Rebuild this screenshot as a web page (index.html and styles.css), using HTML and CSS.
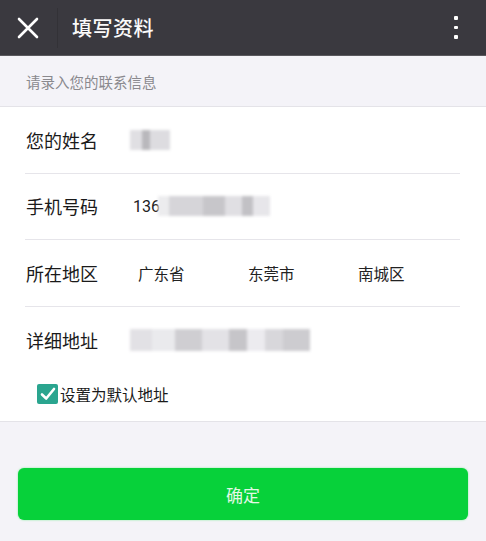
FILE: index.html
```html
<!DOCTYPE html>
<html lang="zh-CN">
<head>
  <meta charset="UTF-8">
  <meta name="viewport" content="width=device-width, initial-scale=1">
  <title>填写资料</title>
  <link rel="stylesheet" href="styles.css">
</head>
<body>
  <!-- Top bar -->
  <header class="topbar">
    <button class="close" aria-label="关闭">
      <svg width="22" height="22" viewBox="0 0 22 22"><path d="M2 2 L20 20 M20 2 L2 20" stroke="#fff" stroke-width="2.6" stroke-linecap="round"/></svg>
    </button>
    <span class="divider"></span>
    <h1 class="title">填写资料</h1>
    <button class="more" aria-label="更多"><i></i><i></i><i></i></button>
  </header>

  <div class="hint">请录入您的联系信息</div>

  <!-- Contact form -->
  <form class="form">
    <div class="row">
      <span class="label">您的姓名</span>
      <span class="value"><span class="mask mask-name"></span></span>
    </div>
    <div class="row">
      <span class="label">手机号码</span>
      <span class="value">136<span class="mask mask-phone"></span></span>
    </div>
    <div class="row">
      <span class="label">所在地区</span>
      <span class="value region">
        <span>广东省</span>
        <span>东莞市</span>
        <span>南城区</span>
      </span>
    </div>
    <div class="row last">
      <span class="label">详细地址</span>
      <span class="value"><span class="mask mask-addr"></span></span>
    </div>
    <label class="default">
      <span class="check">
        <svg width="20" height="20" viewBox="0 0 20 20"><path d="M4 10.5 L8.2 14.5 L16 5" fill="none" stroke="#fff" stroke-width="2.6" stroke-linecap="round" stroke-linejoin="round"/></svg>
      </span>
      设置为默认地址
    </label>
  </form>

  <div class="actions">
    <button class="submit" type="button">确定</button>
  </div>
</body>
</html>
```

FILE: styles.css
```css
:root {
  --bar: #3a393f;
  --page: #f4f3f8;
  --line: #e4e3e8;
  --green: #07d13a;
  --teal: #2aa58f;
  --font-stack: "Noto Sans CJK SC", "Noto Sans", sans-serif;
}
* {box-sizing: border-box; margin: 0; padding: 0;}
body {
  font-family: var(--font-stack);
  background: var(--page);
  color: #111;
  min-height: 100vh;
}
button {font-family: inherit; border: none; background: none; cursor: pointer;}

/* Top bar */
.topbar {
  height: 56px;
  background: var(--bar);
  display: flex;
  align-items: center;
  padding: 0 16px 0 16px;
  border-bottom: 1px solid #5a595e;
}
.close {width: 24px; height: 24px; display: flex; align-items: center; justify-content: center;}
.divider {width: 1px; height: 40px; background: #333237; margin: 0 14px 0 17px;}
.title {font-size: 20px; font-weight: 500; color: #fafafa; flex: 1; letter-spacing: 0.5px;}
.more {display: flex; flex-direction: column; gap: 6px; align-items: center; width: 10px; margin-right: 9px;}
.more i {width: 3.5px; height: 3.5px; background: #fff; border-radius: 1px;}

/* Section hint */
.hint {
  height: 51px;
  padding-left: 26px;
  display: flex;
  align-items: center;
  font-size: 14.5px;
  color: #8a898e;
  border-bottom: 1px solid var(--line);
}

/* Form rows */
.form {
  background: #fff;
  padding: 0 26px 0 25px;
  border-bottom: 1px solid var(--line);
}
.row {
  height: 66.5px;
  display: flex;
  align-items: center;
  border-bottom: 1px solid #e6e5ea;
}
.row.last {border-bottom: none;}
.label {width: 108px; font-size: 18px; color: #1a1a1a; padding-left: 1px;}
.value {display: flex; align-items: center; font-size: 16px; color: #222; font-family: "Roboto", var(--font-stack);}
.region span {width: 110px; padding-left: 8px; font-size: 15.5px; font-family: var(--font-stack);}

/* Blurred personal data */
.mask {display: inline-block; height: 20px; filter: blur(1.5px);}
.mask-name {
  width: 40px; height: 20px; margin-left: -3px;
  background: linear-gradient(90deg, #e0dfe3 0 30%, #b9b8bc 30% 50%, #dddce0 50% 100%);
}
.mask-phone {
  width: 112px; height: 20px; margin-left: -2px;
  background: linear-gradient(90deg, #ececee 0 10%, #d6d5d9 10% 40%, #c7c6ca 40% 60%, #e0dfe3 60% 75%, #c2c1c5 75% 85%, #e7e6ea 85% 100%);
}
.mask-addr {
  width: 180px; height: 22px; margin-left: -3px;
  background: linear-gradient(90deg, #e2e1e5 0 12%, #eaeaed 12% 25%, #cfced2 25% 40%, #e3e2e6 40% 55%, #c6c5c9 55% 65%, #ecebef 65% 75%, #d8d7db 75% 85%, #cdccd0 85% 100%);
}

/* Default address checkbox */
.default {
  display: flex;
  align-items: center;
  height: 48px;
  padding: 0 0 6px 12px;
  font-size: 15.5px;
  color: #1a1a1a;
}
.check {
  width: 21px; height: 20px;
  background: var(--teal);
  border-radius: 2px;
  display: flex; align-items: center; justify-content: center;
  margin-right: 2px;
}

/* Submit */
.actions {padding: 46px 18px 0 18px;}
.submit {
  width: 100%;
  height: 52px;
  background: var(--green);
  color: #e3f8e6;
  font-size: 17px;
  border-radius: 6px;
  box-shadow: 0 0 2px rgba(40, 230, 80, .6);
}
```
